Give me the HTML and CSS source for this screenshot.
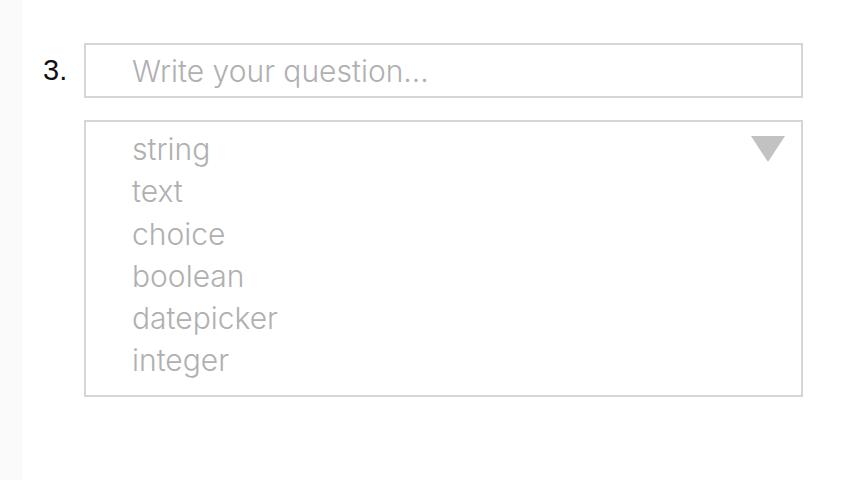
FILE: index.html
```html
<!DOCTYPE html>
<html>
<head>
<meta charset="utf-8">
<link rel="stylesheet" href="styles.css">
</head>
<body>
<div class="page">
  <div class="sidebar"></div>
  <div class="content">
    <div class="question">
      <div class="num">3.</div>
      <div class="fields">
        <div class="input">Write your question...</div>
        <div class="select">
          <ul class="options">
            <li>string</li>
            <li>text</li>
            <li>choice</li>
            <li>boolean</li>
            <li>datepicker</li>
            <li>integer</li>
          </ul>
          <svg class="arrow" width="34" height="26" viewBox="0 0 34 26"><polygon points="0,0 34,0 17,26" fill="#c2c2c2"/></svg>
        </div>
      </div>
    </div>
  </div>
</div>
</body>
</html>
```
FILE: styles.css
```css
html, body { margin: 0; padding: 0; background: #fff; }
.page { display: flex; width: 857px; height: 480px; }
.sidebar { width: 22px; background: #fafafa; flex: none; }
.content { flex: 1; padding-top: 43px; }
.question { display: flex; }
.num {
  width: 62px; flex: none;
  font-family: "Liberation Sans", Arial, sans-serif;
  font-size: 29px; color: #111;
  padding-left: 21px; box-sizing: border-box;
  padding-top: 11px;
}
.fields { width: 719px; display: flex; flex-direction: column; gap: 22px; }
.input {
  height: 55px; box-sizing: border-box;
  border: 2px solid #d6d6d6;
  font-family: Inter, sans-serif; font-size: 30px; font-weight: 300; color: #b0b0b0;
  padding: 1px 0 0 46px; display: flex; align-items: center;
}
.select {
  height: 277px; box-sizing: border-box;
  border: 2px solid #d6d6d6;
  display: flex; justify-content: space-between;
  padding: 6px 16px 0 46px;
}
.options {
  list-style: none; margin: 0; padding: 0;
  font-family: Inter, sans-serif; font-size: 30px; font-weight: 300; color: #b0b0b0;
  line-height: 42.3px;
}
.arrow { margin-top: 8px; }
```
